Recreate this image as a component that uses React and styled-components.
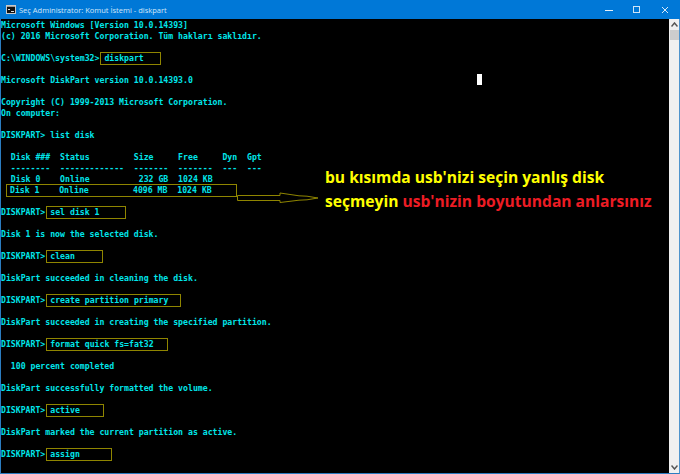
import React from 'react';
import styled, { createGlobalStyle } from 'styled-components';

const Global = createGlobalStyle`
  html, body { margin: 0; padding: 0; background: #000; }
  #root { width: 680px; height: 474px; }
`

const Frame = styled.div`
  width: 680px;
  height: 474px;
  display: flex;
  flex-direction: column;
  background: #000;
  overflow: hidden;
`
const TitleBar = styled.div`
  height: 19px;
  flex: none;
  display: flex;
  align-items: center;
  background: #0078d7;
  padding: 0 1px 0 6px;
  color: #d2e6f7;
  font-family: "Open Sans", sans-serif;
  font-size: 7.5px;
`
const TitleText = styled.span`
  margin-left: 3px;
  flex: 1;
  white-space: nowrap;
`
const WinButton = styled.div`
  width: 28px;
  height: 19px;
  display: flex;
  align-items: center;
  justify-content: center;
`
const Body = styled.div`
  flex: 1;
  display: flex;
  min-height: 0;
  position: relative;
  border-left: 1px solid #2b7cc0;
  border-right: 1px solid #4f93cc;
  border-bottom: 1px solid #2b7cc0;
`
const Console = styled.div`
  flex: 1;
  padding-top: 1px;
  color: #00e6ea;
  font-family: "DejaVu Sans Mono", monospace;
  font-weight: bold;
  font-size: 8.18px;
  line-height: 11px;
`
const Line = styled.div`
  height: 11px;
  white-space: pre;
`
const Cmd = styled.span`
  display: inline-block;
  box-sizing: border-box;
  width: ${({ $w }) => $w}px;
  height: 11px;
  vertical-align: top;
  padding-left: 3px;
  margin-left: 2px;
  outline: 1px solid #8f8500;
`
const Row = styled.span`
  display: inline-block;
  box-sizing: border-box;
  width: 229px;
  height: 11px;
  vertical-align: top;
  margin-left: 6px;
  padding-left: 3px;
  outline: 1px solid #8f8500;
`
const Arrow = styled.svg`
  position: absolute;
  left: 236px;
  top: 172px;
`
const Cursor = styled.div`
  position: absolute;
  left: 476px;
  top: 55px;
  width: 5px;
  height: 11px;
  background: #fff;
`
const Note = styled.div`
  position: absolute;
  left: 324px;
  top: 146px;
  font-family: "Open Sans", sans-serif;
  font-weight: bold;
  font-size: 15.6px;
  line-height: 24px;
  white-space: nowrap;
  color: #ffff00;
`
const Red = styled.span`
  color: #ed1c24;
`
const Scrollbar = styled.div`
  width: 10px;
  flex: none;
  display: flex;
  flex-direction: column;
  background: #f0f0f0;
`
const ScrollBtn = styled.div`
  height: 11px;
  flex: none;
  display: flex;
  align-items: center;
  justify-content: center;
`
const Thumb = styled.div`
  height: 10px;
  margin-left: 1px;
  background: #cdcdcd;
`
const Track = styled.div`
  flex: 1;
`

const CmdIcon = () => (
  <svg width="10" height="9" viewBox="0 0 10 9">
    <rect x="0.5" y="0.5" width="9" height="8" fill="#111" stroke="#c8c8c8" />
    <rect x="1" y="1" width="8" height="1" fill="#9a9a9a" />
    <path d="M2 4h2v1H2zM5 6h3v1H5z" fill="#ddd" />
  </svg>
)

const lines = [
  'Microsoft Windows [Version 10.0.14393]',
  '(c) 2016 Microsoft Corporation. Tüm hakları saklıdır.',
  '',
  { prompt: 'C:\\WINDOWS\\system32>', cmd: 'diskpart', w: 59 },
  '',
  'Microsoft DiskPart version 10.0.14393.0',
  '',
  'Copyright (C) 1999-2013 Microsoft Corporation.',
  'On computer:',
  '',
  'DISKPART> list disk',
  '',
  '  Disk ###  Status         Size     Free     Dyn  Gpt',
  '  --------  -------------  -------  -------  ---  ---',
  '  Disk 0    Online          232 GB  1024 KB',
  { row: 'Disk 1    Online         4096 MB  1024 KB' },
  '',
  { prompt: 'DISKPART>', cmd: 'sel disk 1', w: 78 },
  '',
  'Disk 1 is now the selected disk.',
  '',
  { prompt: 'DISKPART>', cmd: 'clean', w: 55 },
  '',
  'DiskPart succeeded in cleaning the disk.',
  '',
  { prompt: 'DISKPART>', cmd: 'create partition primary', w: 133 },
  '',
  'DiskPart succeeded in creating the specified partition.',
  '',
  { prompt: 'DISKPART>', cmd: 'format quick fs=fat32', w: 120 },
  '',
  '  100 percent completed',
  '',
  'DiskPart successfully formatted the volume.',
  '',
  { prompt: 'DISKPART>', cmd: 'active', w: 56 },
  '',
  'DiskPart marked the current partition as active.',
  '',
  { prompt: 'DISKPART>', cmd: 'assign', w: 64 },
]

const renderLine = (line, i) => {
  if (typeof line === 'string') return <Line key={i}>{line}</Line>
  if (line.row) return <Line key={i}><Row>{line.row}</Row></Line>
  return <Line key={i}>{line.prompt}<Cmd $w={line.w}>{line.cmd}</Cmd></Line>
}

const App = () => (
  <>
    <Global />
    <Frame>
      <TitleBar>
        <CmdIcon />
        <TitleText>Seç Administrator: Komut İstemi - diskpart</TitleText>
        <WinButton>
          <svg width="8" height="8" viewBox="0 0 8 8"><path d="M0 4.5h8" stroke="#e4f0fa" /></svg>
        </WinButton>
        <WinButton>
          <svg width="8" height="8" viewBox="0 0 8 8"><rect x="0.5" y="0.5" width="6" height="6" fill="none" stroke="#cfe4f6" /></svg>
        </WinButton>
        <WinButton>
          <svg width="8" height="8" viewBox="0 0 8 8"><path d="M1 1l6 6M7 1L1 7" stroke="#d8e9f8" /></svg>
        </WinButton>
      </TitleBar>
      <Body>
        <Console>{lines.map(renderLine)}</Console>
        <Scrollbar>
          <ScrollBtn>
            <svg width="7" height="5" viewBox="0 0 7 5"><path d="M0.5 4.5L3.5 1l3 3.5" fill="none" stroke="#555" strokeWidth="1.5" /></svg>
          </ScrollBtn>
          <Thumb />
          <Track />
          <ScrollBtn>
            <svg width="7" height="5" viewBox="0 0 7 5"><path d="M0.5 0.5L3.5 4l3-3.5" fill="none" stroke="#555" strokeWidth="1.5" /></svg>
          </ScrollBtn>
        </Scrollbar>
        <Cursor />
        <Arrow width="84" height="14" viewBox="0 0 84 14">
          <path d="M0.5 4.5H43V2L62 4.8L70 5.2L81 7L70 8.8L62 9.2L43 11.5V9.5H0.5Z" fill="none" stroke="#8f8500" />
        </Arrow>
        <Note>
          bu kısımda usb'nizi seçin yanlış disk
          <br />
          seçmeyin <Red>usb'nizin boyutundan anlarsınız</Red>
        </Note>
      </Body>
    </Frame>
  </>
);

export default App;
